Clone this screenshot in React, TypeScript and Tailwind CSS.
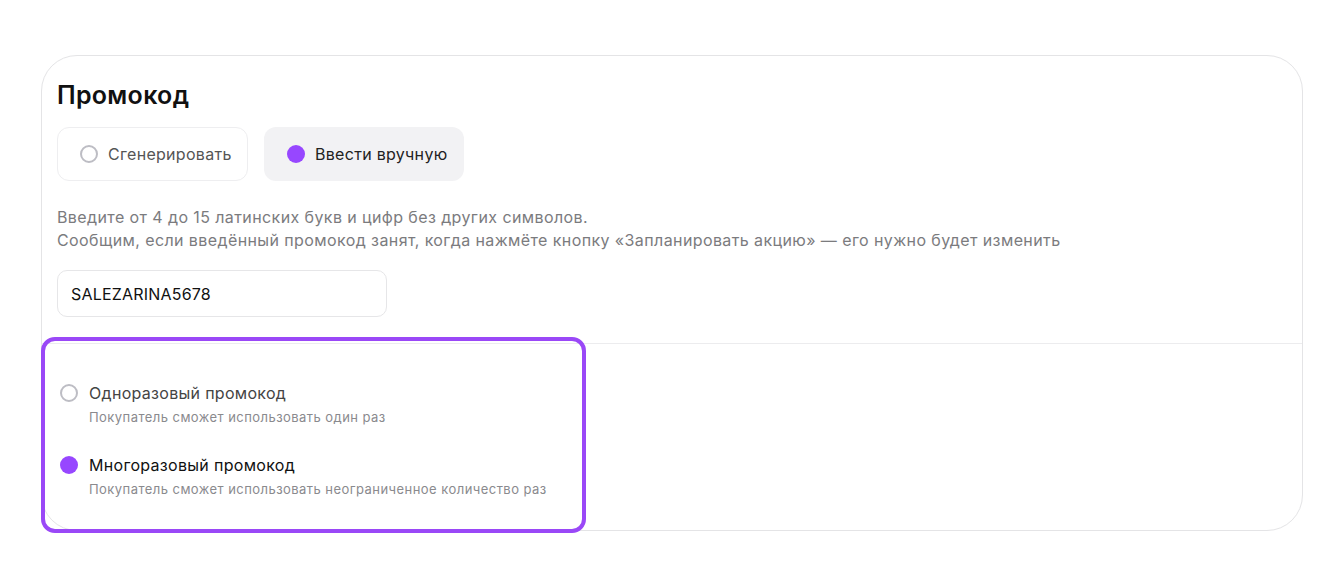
import { useState } from "react"

type Mode = "generate" | "manual"
type Usage = "single" | "multi"

function Dot({ checked }: { checked: boolean }) {
  return checked ? (
    <span className="block w-[18px] h-[18px] rounded-full bg-[#9747ff] shrink-0" />
  ) : (
    <span className="block w-[18px] h-[18px] rounded-full border-2 border-[#bdbdc4] bg-white shrink-0" />
  )
}

const usageOptions: { id: Usage; title: string; hint: string }[] = [
  { id: "single", title: "Одноразовый промокод", hint: "Покупатель сможет использовать один раз" },
  { id: "multi", title: "Многоразовый промокод", hint: "Покупатель сможет использовать неограниченное количество раз" },
]

export default function App() {
  const [mode, setMode] = useState<Mode>("manual")
  const [usage, setUsage] = useState<Usage>("multi")
  const [code, setCode] = useState("SALEZARINA5678")

  return (
    <div className="min-h-screen bg-white pt-[55px] pl-[41px] pr-[41px] font-['Inter',_'Noto_Sans',_sans-serif]">
      <section className="relative w-[1262px] h-[476px] border border-[#e4e4e6] rounded-[36px] bg-white">
        <div className="px-[15px] pt-[23px]">
          <h2 className="text-[25px] leading-8 font-semibold text-[#111] tracking-[0.3px]">Промокод</h2>

          {/* generate / manual switch */}
          <div className="flex gap-4 mt-4 tracking-[0.3px]">
            <button
              onClick={() => setMode("generate")}
              className={`w-[191px] h-[54px] flex items-center gap-[10px] pl-[22px] rounded-xl text-[16px] ${
                mode === "generate" ? "bg-[#f2f2f4] text-[#222]" : "bg-white border border-[#eeeef0] text-[#555]"
              }`}
            >
              <Dot checked={mode === "generate"} />
              Сгенерировать
            </button>
            <button
              onClick={() => setMode("manual")}
              className={`w-[200px] h-[54px] flex items-center gap-[10px] pl-[23px] rounded-xl text-[16px] ${
                mode === "manual" ? "bg-[#f2f2f4] text-[#222]" : "bg-white border border-[#eeeef0] text-[#555]"
              }`}
            >
              <Dot checked={mode === "manual"} />
              Ввести вручную
            </button>
          </div>

          <p className="mt-[25px] text-[16px] leading-[23px] text-[#7b7b7e] tracking-[0.4px]">
            Введите от 4 до 15 латинских букв и цифр без других символов.
            <br />
            Сообщим, если введённый промокод занят, когда нажмёте кнопку «Запланировать акцию» — его нужно будет изменить
          </p>

          <input
            value={code}
            onChange={(e) => setCode(e.target.value)}
            className="mt-[18px] w-[330px] h-[47px] px-[13px] rounded-[10px] border border-[#e6e6e8] text-[16px] text-[#111] tracking-[0.2px] outline-none"
          />
        </div>

        <div className="mt-[26px] border-t border-[#ececee]" />

        {/* usage type */}
        <div className="pl-[18px] pt-[38px] flex flex-col gap-[28px]">
          {usageOptions.map((o) => (
            <button key={o.id} onClick={() => setUsage(o.id)} className="flex items-start gap-[11px] text-left">
              <span className="mt-[2px]">
                <Dot checked={usage === o.id} />
              </span>
              <span className="flex flex-col">
                <span className={`text-[16px] leading-[22px] tracking-[0.3px] ${usage === o.id ? "text-[#111]" : "text-[#444]"}`}>
                  {o.title}
                </span>
                <span className="text-[13px] leading-[18px] mt-[4px] text-[#8a8a8e] tracking-[0.45px]">{o.hint}</span>
              </span>
            </button>
          ))}
        </div>

        {/* highlight frame */}
        <div className="pointer-events-none absolute -left-px top-[281px] w-[545px] h-[196px] rounded-[14px] border-4 border-[#9a48f7]" />
      </section>
    </div>
  )
}
